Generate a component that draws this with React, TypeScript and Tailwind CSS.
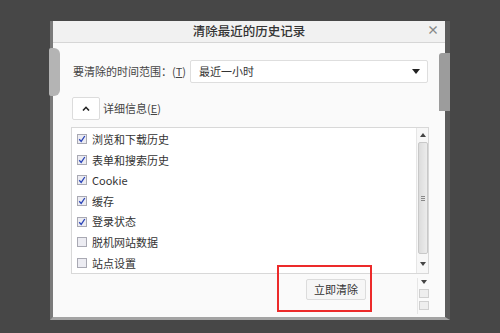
import React from "react";

const font = { fontFamily: '"Noto Sans CJK SC", "Noto Sans", sans-serif' };

function Check({ checked }: { checked: boolean }) {
  return (
    <span className="w-[10px] h-[10px] border border-[#a9a9b3] bg-[#ececf2] flex items-center justify-center shrink-0">
      {checked && (
        <svg width="8" height="8" viewBox="0 0 8 8">
          <path d="M1.2 4.2 L3.2 6.4 L6.8 1" fill="none" stroke="#2b45b8" strokeWidth="1.3" />
        </svg>
      )}
    </span>
  );
}

const items: [string, boolean][] = [
  ["浏览和下载历史", true],
  ["表单和搜索历史", true],
  ["Cookie", true],
  ["缓存", true],
  ["登录状态", true],
  ["脱机网站数据", false],
  ["站点设置", false],
];

export default function App() {
  return (
    <div className="w-[500px] h-[333px] bg-[#474747] relative overflow-hidden pt-[21px] pl-[50px]" style={font}>
      <div className="w-[400px] h-[299px] border-l-[3px] border-l-[#7a7a7a] border-b-[3px] border-b-[#a3a3a3] border-r-[5px] border-r-[#5b5b5b] flex flex-col bg-[#fafafa]">
        <div className="h-[22px] bg-[#f1f1f1] border-b border-[#d6d6d6] flex items-center justify-center relative shrink-0">
          <span className="text-[12.5px] font-medium text-[#333] leading-none">清除最近的历史记录</span>
          <span className="absolute right-[6px] top-[3px] text-[12px] text-[#888] font-bold leading-none">×</span>
        </div>
        <div className="flex flex-col pl-[18px] pr-[16px]">
          <div className="flex items-center mt-[17px] pl-[2px] pr-[1px]">
            <span className="text-[11px] text-[#444] w-[117px]">要清除的时间范围：(<span className="underline">T</span>)</span>
            <div className="flex-1 h-[23px] bg-white border border-[#dedede] rounded-[2px] flex items-center justify-between pl-[8px] pr-[7px]">
              <span className="text-[11px] text-[#333]">最近一小时</span>
              <svg width="8" height="5" viewBox="0 0 8 5"><path d="M0 0 H8 L4 5 Z" fill="#222" /></svg>
            </div>
          </div>
          <div className="flex items-center mt-[14px] pl-[1px]">
            <div className="w-[28px] h-[23px] border border-[#dcdcdc] bg-white rounded-[2px] flex items-center justify-center">
              <svg width="8" height="5" viewBox="0 0 8 5"><path d="M1 4.5 L4 1.3 L7 4.5" fill="none" stroke="#222" strokeWidth="1.6" /></svg>
            </div>
            <span className="text-[11px] text-[#444] ml-[3px]">详细信息(<span className="underline">E</span>)</span>
          </div>
          <div className="mt-[7px] h-[147px] bg-white border border-[#d8d8d8] flex">
            <div className="flex-1 flex flex-col pt-[1px] pl-[5px]">
              {items.map(([t, c]) => (
                <div key={t} className="h-[21px] flex items-center gap-[5px]">
                  <Check checked={c} />
                  <span className="text-[11px] text-[#333]">{t}</span>
                </div>
              ))}
            </div>
            <div className="w-[12px] flex flex-col items-center bg-[#f7f7f7] border-l border-[#e6e6e6]">
              <div className="h-[14px] w-full flex items-center justify-center">
                <svg width="6" height="4" viewBox="0 0 6 4"><path d="M0 4 L3 0 L6 4 Z" fill="#444" /></svg>
              </div>
              <div className="w-[10px] h-[112px] rounded-[2px] border border-[#c8c8c8] bg-gradient-to-r from-[#dcdcdc] to-[#ececec] flex flex-col items-center justify-center gap-[1px]">
                <span className="w-[4px] h-[1px] bg-[#888]" />
                <span className="w-[4px] h-[1px] bg-[#888]" />
                <span className="w-[4px] h-[1px] bg-[#888]" />
              </div>
              <div className="flex-1 w-full flex items-center justify-center">
                <svg width="6" height="4" viewBox="0 0 6 4"><path d="M0 0 H6 L3 4 Z" fill="#444" /></svg>
              </div>
            </div>
          </div>
          <div className="flex items-start mt-[4px]">
            <div className="flex-1 flex justify-end pr-[51px] pt-[1px]">
              <div className="w-[60px] h-[21px] border border-[#dcdcdc] bg-[#f6f6f6] rounded-[2px] flex items-center justify-center">
                <span className="text-[11px] text-[#333]">立即清除</span>
              </div>
            </div>
            <div className="w-[12px] h-[36px] flex flex-col items-center border-l border-[#e6e6e6]">
              <svg width="6" height="4" viewBox="0 0 6 4" className="mt-[2px]"><path d="M0 0 H6 L3 4 Z" fill="#444" /></svg>
              <div className="mt-[5px] w-[10px] h-[9px] border border-[#d0d0d0] bg-[#eee]" />
              <div className="mt-[3px] w-[10px] h-[9px] border border-[#d0d0d0] bg-[#eee]" />
            </div>
          </div>
        </div>
      </div>
      <div className="absolute left-[277px] top-[265px] w-[95px] h-[47px] border-2 border-[#ec2a2a]" />
      <div className="absolute left-[49px] top-[48px] w-[11px] h-[48px] rounded-r-[6px] rounded-l-[2px] bg-[#b4b4b4]" />
      <div className="absolute left-[439px] top-[53px] w-[11px] h-[58px] rounded-tl-[3px] bg-[#9c9c9c]" />
    </div>
  );
}
